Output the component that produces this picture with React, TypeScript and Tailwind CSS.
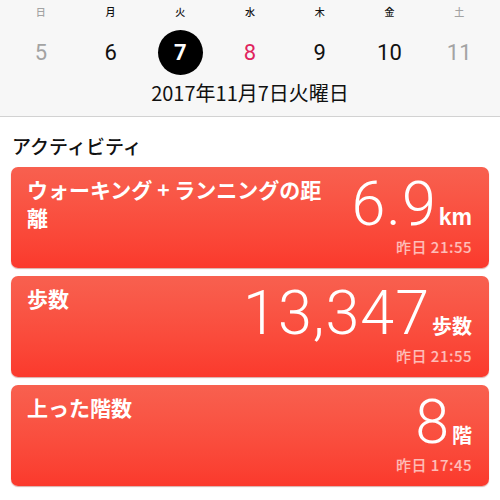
import React from "react";

const jp = "font-['Noto_Sans_CJK_JP',sans-serif]";

const days = [
  { w: "日", n: "5", wc: "text-[#a3a3a3]", nc: "text-[#a3a3a3]" },
  { w: "月", n: "6", wc: "text-[#111]", nc: "text-[#111]" },
  { w: "火", n: "7", wc: "text-[#111]", nc: "text-white", today: true },
  { w: "水", n: "8", wc: "text-[#111]", nc: "text-[#e0245e]" },
  { w: "木", n: "9", wc: "text-[#111]", nc: "text-[#111]" },
  { w: "金", n: "10", wc: "text-[#111]", nc: "text-[#111]" },
  { w: "土", n: "11", wc: "text-[#a3a3a3]", nc: "text-[#a3a3a3]" },
];

const cards = [
  { title: ["ウォーキング + ランニングの距", "離"], value: "6.9", unit: "km", latin: true, time: "昨日 21:55" },
  { title: ["歩数"], value: "13,347", unit: "歩数", time: "昨日 21:55" },
  { title: ["上った階数"], value: "8", unit: "階", time: "昨日 17:45" },
];

function Card({ c }: { c: (typeof cards)[number] }) {
  return (
    <div className="h-[101px] rounded-[7px] bg-linear-to-b from-[#f8604f] to-[#fb392c] shadow-[0_1px_1px_rgba(150,20,10,0.35)] flex justify-between pl-4 pr-[17px] pt-[8px]">
      <div className={`${jp} text-[21px] font-bold leading-[28px] text-white whitespace-nowrap`}>
        {c.title.map((t, i) => (
          <div key={i}>{t}</div>
        ))}
      </div>
      <div className="flex flex-col items-end text-white pt-[3px]">
        <div className="flex items-baseline">
          <span className="font-['Roboto',sans-serif] font-light text-[61px] leading-[52px] tracking-[1px]">{c.value}</span>
          <span
            className={`ml-[2px] font-bold leading-[20px] ${
              c.latin ? "font-['Liberation_Sans',sans-serif] text-[23px]" : `${jp} text-[20px]`
            }`}
          >
            {c.unit}
          </span>
        </div>
        <div className={`${jp} mt-[7px] text-[15px] leading-[20px] font-medium tracking-[0.5px] text-white/65`}>
          {c.time}
        </div>
      </div>
    </div>
  );
}

export default function App() {
  return (
    <div className="w-[500px] h-[500px] bg-white overflow-hidden">
      <div className="h-[117px] bg-[#f7f7f7] border-b border-[#d2d2d2]">
        <div className="grid grid-cols-7 px-[6px]">
          {days.map((d) => (
            <div key={d.w} className="flex flex-col items-center">
              <div className={`${jp} ${d.wc} h-[30px] pt-[5px] text-[10px] leading-[14px] font-medium`}>{d.w}</div>
              <div
                className={`w-[45px] h-[45px] rounded-full flex items-center justify-center font-['Roboto',sans-serif] text-[22px] ${
                  d.today ? "bg-black font-bold" : "font-normal"
                } ${d.nc}`}
              >
                {d.n}
              </div>
            </div>
          ))}
        </div>
        <div className={`${jp} mt-[5px] text-center text-[20px] leading-[25px] text-[#111]`}>2017年11月7日火曜日</div>
      </div>
      <div className="px-[11px]">
        <div className={`${jp} pt-[17px] pl-[1px] text-[19px] leading-[24px] text-[#111] font-medium`}>アクティビティ</div>
        <div className="mt-[9px] flex flex-col gap-2">
          {cards.map((c, i) => (
            <Card key={i} c={c} />
          ))}
        </div>
      </div>
    </div>
  );
}
